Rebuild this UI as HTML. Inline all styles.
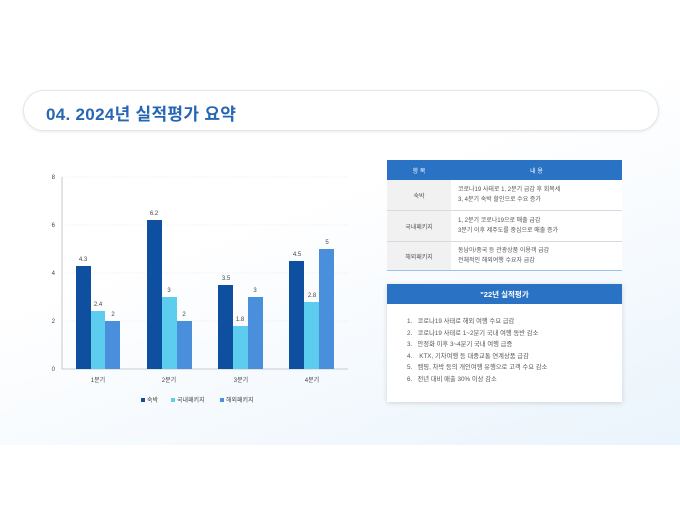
<!DOCTYPE html>
<html><head><meta charset="utf-8"><style>
*{margin:0;padding:0;box-sizing:border-box}
body{width:680px;height:510px;position:relative;overflow:hidden;background:#fff;font-family:"Liberation Sans","Noto Sans CJK KR",sans-serif}
.bg{position:absolute;left:0;top:0;width:680px;height:445px;background:linear-gradient(160deg,#fff 0%,#fff 45%,#eaf4fc 100%)}
.pill{position:absolute;left:23px;top:90px;width:636px;height:41px;border-radius:21px;background:#fff;border:1.5px solid #e3e6ea;box-shadow:0 1px 3px rgba(0,0,0,.08)}
.pill span{position:absolute;left:22px;top:9px;font-size:17px;font-weight:bold;color:#2766b2;letter-spacing:.3px}
.t{position:absolute;left:387px;top:160px;width:235px;font-size:6px;color:#555}
.t .h{height:20px;background:#2a72c4;color:#fff;display:flex}
.t .h div{display:flex;align-items:center;justify-content:center}
.t .r{display:flex;border-bottom:1px solid #d5dbe2}
.c1{width:64px;display:flex;align-items:center;justify-content:center;background:#f1f1f1}
.c2{flex:1;padding-left:7px;display:flex;flex-direction:column;justify-content:center;line-height:10px;background:#fff}
.b{position:absolute;left:387px;top:284px;width:235px;height:118px;background:#fff;box-shadow:0 1px 5px rgba(0,0,0,.15)}
.b .h{height:20px;background:#2a72c4;color:#fff;font-size:7.5px;font-weight:bold;display:flex;align-items:center;justify-content:center}
.b ol{list-style:none;padding:12px 0 0 20px;font-size:6.3px;color:#555;line-height:11.5px}
</style></head><body>
<div class="bg"></div>
<div class="pill"><span>04. 2024년 실적평가 요약</span></div>
<svg style="position:absolute;left:0;top:0" width="680" height="510" font-family="Liberation Sans, Noto Sans CJK KR, sans-serif" font-size="6" fill="#444">
<g stroke="#d8dde3" stroke-dasharray="1,1.5" stroke-width="0.6">
<line x1="62" y1="177" x2="348" y2="177"/><line x1="62" y1="225" x2="348" y2="225"/><line x1="62" y1="273" x2="348" y2="273"/><line x1="62" y1="321" x2="348" y2="321"/></g>
<line x1="62" y1="177" x2="62" y2="369" stroke="#bbb" stroke-width="0.8"/>
<line x1="62" y1="369" x2="348" y2="369" stroke="#bbb" stroke-width="0.8"/>
<g text-anchor="end"><text x="55" y="179">8</text><text x="55" y="227">6</text><text x="55" y="275">4</text><text x="55" y="323">2</text><text x="55" y="371">0</text></g>
<g fill="#0f4fa0"><rect x="76" y="266" width="15" height="103"/><rect x="147" y="220" width="15" height="149"/><rect x="218" y="285" width="15" height="84"/><rect x="289" y="261" width="15" height="108"/></g>
<g fill="#5ccdee"><rect x="91" y="311" width="14" height="58"/><rect x="162" y="297" width="15" height="72"/><rect x="233" y="326" width="15" height="43"/><rect x="304" y="302" width="15" height="67"/></g>
<g fill="#4a8fdc"><rect x="105" y="321" width="15" height="48"/><rect x="177" y="321" width="15" height="48"/><rect x="248" y="297" width="15" height="72"/><rect x="319" y="249" width="15" height="120"/></g>
<g text-anchor="middle">
<text x="83" y="261">4.3</text><text x="98" y="306">2.4</text><text x="113" y="316">2</text>
<text x="154" y="215">6.2</text><text x="169" y="292">3</text><text x="184" y="316">2</text>
<text x="226" y="280">3.5</text><text x="240" y="321">1.8</text><text x="255" y="292">3</text>
<text x="297" y="256">4.5</text><text x="312" y="297">2.8</text><text x="327" y="244">5</text>
<text x="98" y="382">1분기</text><text x="169" y="382">2분기</text><text x="241" y="382">3분기</text><text x="312" y="382">4분기</text></g>
<rect x="141" y="398" width="4" height="4" fill="#0f4fa0"/><text x="147" y="402">숙박</text>
<rect x="171" y="398" width="4" height="4" fill="#5ccdee"/><text x="177" y="402">국내패키지</text>
<rect x="220" y="398" width="4" height="4" fill="#4a8fdc"/><text x="226" y="402">해외패키지</text>
</svg>
<div class="t">
<div class="h"><div style="width:64px">항 목</div><div style="flex:1">내 용</div></div>
<div class="r" style="height:31px"><div class="c1">숙박</div><div class="c2"><div>코로나19 사태로 1, 2분기 급감 후 회복세</div><div>3, 4분기 숙박 할인으로 수요 증가</div></div></div>
<div class="r" style="height:31px"><div class="c1">국내패키지</div><div class="c2"><div>1, 2분기 코로나19으로 매출 급감</div><div>3분기 이후 제주도를 중심으로 매출 증가</div></div></div>
<div class="r" style="height:29px;border-bottom:1.5px solid #9cc3e6"><div class="c1">해외패키지</div><div class="c2"><div>동남아/중국 등 관광상품 이용객 급감</div><div>전체적인 해외여행 수요자 급감</div></div></div>
</div>
<div class="b"><div class="h">"22년 실적평가</div>
<ol><li>1.&nbsp;&nbsp; 코로나19 사태로 해외 여행 수요 급감</li><li>2.&nbsp;&nbsp; 코로나19 사태로 1~2분기 국내 여행 동반 감소</li><li>3.&nbsp;&nbsp; 안정화 이후 3~4분기 국내 여행 급증</li><li>4.&nbsp;&nbsp;&nbsp; KTX, 기차여행 등 대중교통 연계상품 급감</li><li>5.&nbsp;&nbsp; 캠핑, 차박 등의 개인여행 유행으로 고객 수요 감소</li><li>6.&nbsp;&nbsp; 전년 대비 매출 30% 이상 감소</li></ol></div>
</body></html>
